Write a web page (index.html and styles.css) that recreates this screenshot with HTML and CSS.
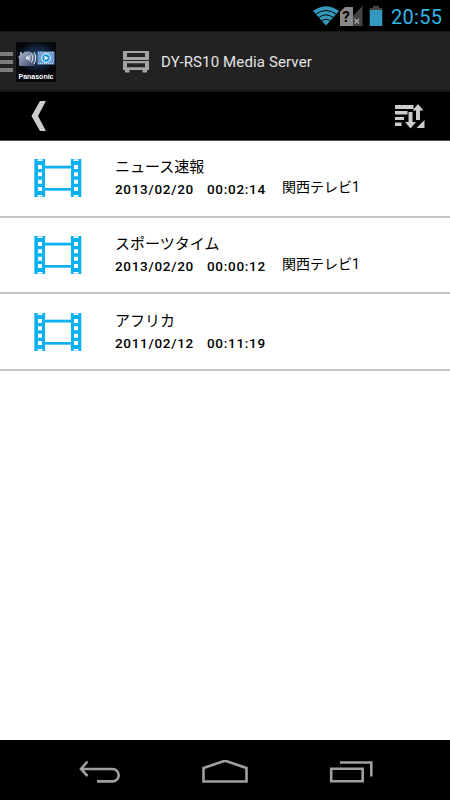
FILE: index.html
```
<!DOCTYPE html>
<html lang="ja">
<head>
    <meta charset="UTF-8">
    <meta name="viewport" content="width=device-width, initial-scale=1.0">
    <title>DY-RS10 Media Server</title>
    <link rel="stylesheet" href="styles.css">
</head>
<body>
    <!-- film icon shared by the rows -->
    <svg class="defs" width="0" height="0">
        <symbol id="film" viewBox="0 0 48 38">
            <path class="film-glow" d="M0.5 0.5H11V6.5H37V0.5H47.5V37.5H37V31.5H11V37.5H0.5Z"/>
            <path fill="#0ab0f0" fill-rule="evenodd" d="M0.5 0H3.5V2H8.5V0H11V7H37V0H39.5V2H44.5V0H47V38H44.5V36H39.5V38H37V31.5H11V38H8.5V36H3.5V38H0.5Z M11 9.5V29H37V9.5Z M4 6V10H8V6Z M4 13.3V17.3H8V13.3Z M4 20.7V24.7H8V20.7Z M4 28V32H8V28Z M40 6V10H44V6Z M40 13.3V17.3H44V13.3Z M40 20.7V24.7H44V20.7Z M40 28V32H44V28Z"/>
        </symbol>
    </svg>

    <div class="status-bar">
        <svg class="wifi" width="26" height="20" viewBox="0 0 26 20">
            <path fill="#3499bd" d="M13 19.5L0 5Q13 -4.5 26 5Z"/>
            <g fill="none" stroke="#000" stroke-width="1">
                <path d="M2.5 8.3Q13 0.7 23.5 8.3"/>
                <path d="M5.5 11.7Q13 6 20.5 11.7"/>
                <path d="M8.5 15Q13 11.5 17.5 15"/>
            </g>
        </svg>
        <svg class="signal" width="23" height="20" viewBox="0 0 23 20">
            <path fill="#444" d="M22.5 0V20H12V11Z"/>
            <path fill="#888" d="M5 1H13V20H0V6Z"/>
            <text x="2.2" y="16" class="signal-mark">?</text>
            <path stroke="#aaa" stroke-width="1.3" d="M14.5 13L19 17.5M19 13L14.5 17.5"/>
        </svg>
        <svg class="battery" width="14" height="20" viewBox="0 0 14 20">
            <path fill="#444" d="M4 0H10V2H13.3V5H0.7V2H4Z"/>
            <path fill="#3499bd" d="M0.7 4H13.3V20H0.7Z"/>
        </svg>
        <span class="clock">20:55</span>
    </div>

    <div class="header">
        <div class="menu"><i></i><i></i><i></i></div>
        <svg class="logo" width="40" height="40" viewBox="0 0 40 40">
            <defs>
                <radialGradient id="glow">
                    <stop offset="0" stop-color="#254c80"/>
                    <stop offset="1" stop-color="#05070c"/>
                </radialGradient>
                <linearGradient id="house" x2="1" y2="1">
                    <stop offset="0" stop-color="#b4bdcc"/>
                    <stop offset="1" stop-color="#35466f"/>
                </linearGradient>
            </defs>
            <rect width="40" height="40" fill="#05070c"/>
            <ellipse cx="21" cy="15" rx="20" ry="16" fill="url(#glow)"/>
            <path fill="url(#house)" d="M2 15L4 13V10H6V12L9 9.5H14L19 13V24H3V16Z"/>
            <path fill="none" stroke="#dfe6ef" stroke-width="1" d="M13 13Q15.5 16 13 19M15.5 11.5Q18.5 16 15.5 20.5M18 10Q21.5 16 18 22"/>
            <rect x="10" y="14.5" width="3" height="3" fill="#dfe6ef"/>
            <rect x="21.5" y="9.5" width="17" height="13" fill="#6f9bd0"/>
            <path stroke="#b9d2ee" stroke-dasharray="1 1" d="M22 10.5H38M22 21.5H38"/>
            <circle cx="30" cy="16" r="4.3" fill="#1c96df" stroke="#d3eafa" stroke-width="1.2"/>
            <path fill="#fff" d="M28.5 13.7L32.5 16L28.5 18.3Z"/>
            <text x="2.5" y="36.5" class="logo-text" textLength="35" lengthAdjust="spacingAndGlyphs">Panasonic</text>
        </svg>
        <svg class="server" width="26" height="22" viewBox="0 0 26 22">
            <path fill="#a4a4a4" fill-rule="evenodd" d="M0 0H26V9H0Z M4 2V6H22V2Z M0 10H26V19H24V21.5H19.5V19H6.5V21.5H2V19H0Z M4 12.3V16.3H22V12.3Z"/>
        </svg>
        <span class="title">DY-RS10 Media Server</span>
    </div>

    <div class="toolbar">
        <svg width="16" height="30" viewBox="0 0 16 30">
            <path fill="#ccc" d="M9 0H15L7 15L15 30H9L0.5 15Z"/>
        </svg>
        <svg width="31" height="25" viewBox="0 0 31 25">
            <g fill="#ccc">
                <path d="M1 1H19.5V5H1Z M1 7H13.5V10.5H1Z M1 13H10V16H1Z M1 18.5H7.5V22H1Z"/>
                <path d="M14.5 8H18.5V18H22L16.5 24.5L11 18H14.5Z"/>
                <path d="M22 16V6.5H18.5L24 0L29.5 6.5H26V16Z"/>
                <path d="M30.5 16V24H22.5Z"/>
            </g>
        </svg>
    </div>

    <div class="list">
        <div class="item">
            <svg class="film" width="48" height="38"><use href="#film"/></svg>
            <div class="info">
                <div class="name">ニュース速報</div>
                <div class="meta">
                    <span class="date">2013/02/20</span>
                    <span class="time">00:02:14</span>
                    <span class="channel">関西テレビ1</span>
                </div>
            </div>
        </div>
        <div class="item">
            <svg class="film" width="48" height="38"><use href="#film"/></svg>
            <div class="info">
                <div class="name">スポーツタイム</div>
                <div class="meta">
                    <span class="date">2013/02/20</span>
                    <span class="time">00:00:12</span>
                    <span class="channel">関西テレビ1</span>
                </div>
            </div>
        </div>
        <div class="item">
            <svg class="film" width="48" height="38"><use href="#film"/></svg>
            <div class="info">
                <div class="name">アフリカ</div>
                <div class="meta">
                    <span class="date">2011/02/12</span>
                    <span class="time">00:11:19</span>
                </div>
            </div>
        </div>
    </div>

    <div class="nav-bar">
        <svg width="42" height="24" viewBox="0 0 42 24">
            <path d="M8.5 1.5L2 9L8.5 16M2 9H33.5A6.2 6.2 0 0 1 33.5 21.4H18"/>
        </svg>
        <svg width="46" height="24" viewBox="0 0 46 24">
            <path d="M1.5 8L23 0.7L44.5 8V21.5H1.5Z"/>
        </svg>
        <svg width="44" height="24" viewBox="0 0 44 24">
            <path d="M2.2 8.7H33.7V21.3H2.2Z M11 2.5H42.3V16.5M42.3 2.5"/>
        </svg>
    </div>
</body>
</html>
```

FILE: styles.css
```
body {
    margin: 0;
    width: 450px;
    height: 800px;
    display: flex;
    flex-direction: column;
    overflow: hidden;
    background: #fff;
    font-family: Roboto, "Noto Sans CJK JP", sans-serif;
}

svg {
    display: block;
    flex: none;
}

.defs {
    position: absolute;
}

.status-bar {
    height: 31px;
    box-sizing: border-box;
    padding-right: 7px;
    display: flex;
    align-items: center;
    justify-content: flex-end;
    background: #000;
}

.signal {
    margin-left: 1px;
}

.signal-mark {
    font-size: 15px;
    font-weight: bold;
    fill: #000;
}

.battery {
    margin-left: 6px;
}

.clock {
    width: 52px;
    margin: 2px 0 0 8px;
    font-size: 20px;
    line-height: 24px;
    letter-spacing: 0.3px;
    color: #33b5e5;
}

.header {
    height: 61px;
    box-sizing: border-box;
    padding-top: 2px;
    border-top: 1px solid #181818;
    border-bottom: 3px solid #1a1a1a;
    display: flex;
    align-items: center;
    background: #222;
}

.menu {
    width: 13px;
    margin-right: 3px;
    display: flex;
    flex-direction: column;
    gap: 4px;
}

.menu i {
    height: 4px;
    background: #7c7c7c;
}

.logo-text {
    font-family: "Liberation Sans", Arial, sans-serif;
    font-size: 7.5px;
    font-weight: bold;
    fill: #fff;
}

.server {
    margin-left: 67px;
}

.title {
    margin: 1px 0 0 12px;
    font-size: 15px;
    letter-spacing: 0.13px;
    color: #e4e4e4;
}

.toolbar {
    height: 49px;
    box-sizing: border-box;
    padding: 0 25px 0 31px;
    border-bottom: 1px solid #555;
    display: flex;
    align-items: center;
    justify-content: space-between;
    background: #000;
}

.list {
    flex: 1;
}

.item {
    height: 76.7px;
    box-sizing: border-box;
    padding-left: 34px;
    border-bottom: 2px solid #c6c6c6;
    display: flex;
    align-items: center;
}

.film-glow {
    fill: none;
    stroke: #b5e5fa;
    stroke-width: 1;
}

.info {
    margin: 1px 0 0 33px;
    color: #000;
}

.name {
    font-size: 15px;
    line-height: 20px;
}

.meta {
    display: flex;
    font-size: 14px;
    line-height: 22px;
}

.date,
.time {
    padding-top: 1px;
    font-size: 13.5px;
    font-weight: 500;
    letter-spacing: 0.7px;
}

.date {
    width: 92px;
}

.time {
    width: 75px;
}

.channel {
    margin-top: -1px;
}

.nav-bar {
    height: 60px;
    box-sizing: border-box;
    padding: 4px 77px 0 79px;
    display: flex;
    align-items: center;
    justify-content: space-between;
    background: #000;
}

.nav-bar path {
    fill: none;
    stroke: #a0a0a0;
    stroke-width: 2.6;
}
```
